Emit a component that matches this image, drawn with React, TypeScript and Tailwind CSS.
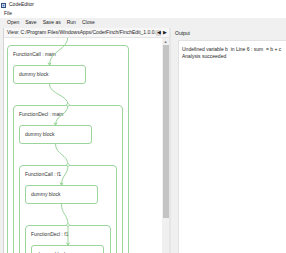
import type { ReactNode } from "react";

const line = "#8fcf8f";

const Scope = ({ label, children }: { label: string; children?: ReactNode }) => (
  <div className="border border-[#9bd59b] rounded-[4px] pt-[4px] px-[5px] pb-[60px]">
    <div className="h-[8px] leading-[8px] whitespace-nowrap">{label}</div>
    <div className="mt-[7px] w-[73px] h-[19px] border border-[#9bd59b] rounded-[3px] flex items-center pl-[5px] bg-white">
      dummy block
    </div>
    {children && <div className="mt-[21px]">{children}</div>}
  </div>
);

const Arrow = ({ x, y }: { x: number; y: number }) => (
  <path d={`M${x - 1.6},${y - 2.4} L${x},${y} L${x + 1.6},${y - 2.4}`} fill="none" stroke={line} strokeWidth="0.9" />
);

const Port = ({ x, y }: { x: number; y: number }) => (
  <path d={`M${x - 1.6},${y} L${x},${y - 1.6} L${x + 1.6},${y} L${x},${y + 1.6} Z`} fill="white" stroke={line} strokeWidth="0.8" />
);

const s = (x1: number, y1: number, x2: number, y2: number) => {
  const m = (y2 - y1) / 2;
  return `M${x1},${y1} C${x1},${y1 + m} ${x2},${y2 - m} ${x2},${y2}`;
};

const Connectors = () => (
  <svg className="absolute inset-0 pointer-events-none" width="158" height="215">
    <g transform="translate(-4,-38)" fill="none" stroke={line} strokeWidth="0.9">
      <path d={s(68, 36, 49.5, 65)} />
      <Arrow x={49.5} y={65} />
      <path d={s(49.5, 84, 68, 105)} />
      <path d={s(68, 105, 55.5, 125)} />
      <Arrow x={55.5} y={125} />
      <Port x={68} y={105} />
      <path d={s(55.5, 144, 68, 165)} />
      <path d={s(68, 165, 61.5, 185)} />
      <Arrow x={61.5} y={185} />
      <Port x={68} y={165} />
      <path d={s(61.5, 204, 68, 225)} />
      <path d="M68,225 L68,245" />
      <Arrow x={68} y={245} />
      <Port x={68} y={225} />
    </g>
  </svg>
);

export default function App() {
  return (
    <div className="w-[286px] h-[253px] overflow-hidden bg-white text-[#1e1e1e] text-[5px] font-['Liberation_Sans',Arial,sans-serif] flex flex-col">
      <div className="h-[10px] flex items-center pl-[1px] gap-[3px] shrink-0">
        <svg width="5" height="5" viewBox="0 0 5 5">
          <rect x="0.5" y="0.5" width="4" height="4" fill="#ffffff" stroke="#35507a" strokeWidth="1" />
          <rect x="1.5" y="1.5" width="2" height="2" fill="#4a7bc4" />
        </svg>
        <span>CodeEditor</span>
      </div>
      <div className="h-[8px] flex items-center pl-[4px] shrink-0">File</div>
      <div className="h-[10px] bg-[#f0f0f0] flex items-center pl-[7px] gap-[6px] shrink-0">
        <span>Open</span>
        <span>Save</span>
        <span>Save as</span>
        <span>Run</span>
        <span>Close</span>
      </div>
      <div className="flex flex-1 min-h-0 bg-[#f0f0f0]">
        <div className="ml-[3px] w-[166px] border-l border-[#d4d4d4] flex flex-col bg-[#f7f7f7]">
          <div className="h-[10px] flex items-center shrink-0 border-b border-[#e4e4e4]">
            <div className="flex-1 min-w-0 overflow-hidden whitespace-nowrap pl-[3px]">
              View: C:/Program Files/WindowsApps/CoderFinch/FinchEdit_1.0.0.0_x64__8wekyb3d8bbwe
            </div>
            <div className="flex items-center gap-[1px] pr-[2px] text-[#222] text-[5px] leading-none">
              <span className="w-[5px] h-[6px] bg-[#d8d8d8] flex items-center justify-center">◀</span>
              <span className="w-[5px] h-[6px] flex items-center justify-center">▶</span>
            </div>
          </div>
          <div className="flex flex-1 min-h-0">
            <div className="relative flex-1 min-w-0 overflow-hidden bg-white pl-[3px] pt-[7px] text-[#333]">
              <div className="w-[122px]">
                <Scope label="FunctionCall : main">
                  <Scope label="FunctionDecl : main">
                    <Scope label="FunctionCall : f1">
                      <Scope label="FunctionDecl : f1" />
                    </Scope>
                  </Scope>
                </Scope>
              </div>
              <Connectors />
            </div>
            <div className="w-[7px] bg-[#f0f0f0] flex flex-col items-center shrink-0">
              <div className="h-[7px] text-[4px] leading-[7px] text-[#777]">▲</div>
              <div className="w-[6px] h-[173px] bg-[#c4c4c4]" />
            </div>
          </div>
        </div>
        <div className="w-[2px] bg-[#e6e6e6] shrink-0" />
        <div className="flex-1 flex flex-col min-w-0">
          <div className="h-[12px] flex items-center pl-[4px] shrink-0">Output</div>
          <div className="flex-1 ml-[7px] bg-white border-l border-t border-[#e2e2e2] pl-[3px] pt-[5px] leading-[7px] whitespace-nowrap">
            <div>Undefined variable b&nbsp; in Line 6 : sum&nbsp; = b + c</div>
            <div>Analysis succeeded</div>
          </div>
        </div>
      </div>
    </div>
  );
}
